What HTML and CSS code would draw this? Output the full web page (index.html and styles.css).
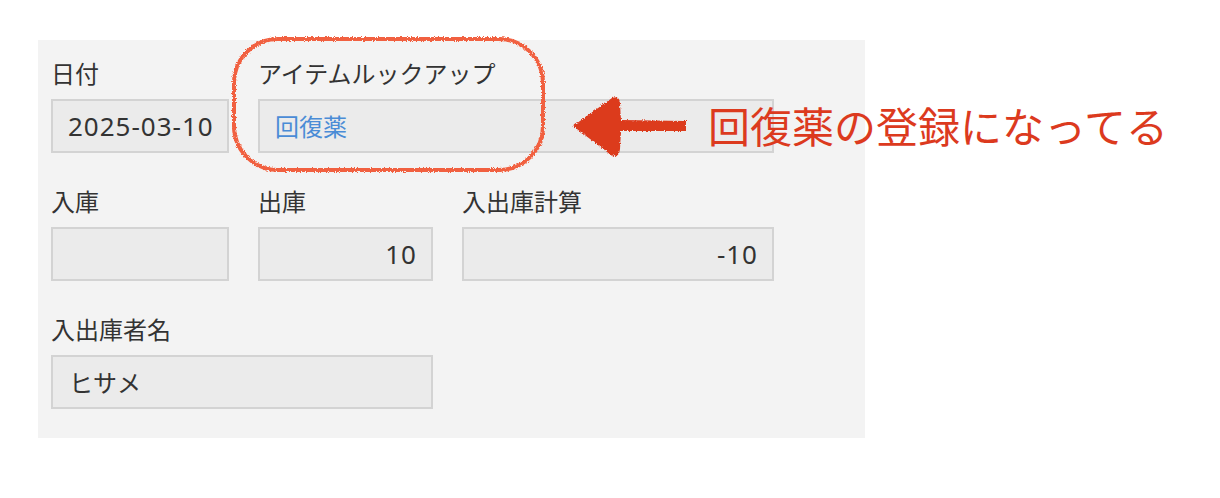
FILE: index.html
```html
<!DOCTYPE html>
<html lang="ja">
<head>
<meta charset="utf-8">
<title>入出庫</title>
<link rel="stylesheet" href="styles.css">
</head>
<body>
<div class="stage">
  <form class="panel">
    <div class="row">
      <div class="field w-date">
        <div class="label">日付</div>
        <div class="input">2025-03-10</div>
      </div>
      <div class="field w-lookup">
        <div class="label">アイテムルックアップ</div>
        <div class="input link">回復薬</div>
      </div>
    </div>
    <div class="row">
      <div class="field w-date">
        <div class="label">入庫</div>
        <div class="input num"></div>
      </div>
      <div class="field w-out">
        <div class="label">出庫</div>
        <div class="input num">10</div>
      </div>
      <div class="field w-calc">
        <div class="label">入出庫計算</div>
        <div class="input num">-10</div>
      </div>
    </div>
    <div class="row">
      <div class="field w-name">
        <div class="label">入出庫者名</div>
        <div class="input jp">ヒサメ</div>
      </div>
    </div>
  </form>

  <svg class="marks" width="1220" height="498" viewBox="0 0 1220 498" aria-hidden="true">
    <defs>
      <filter id="crayon" x="-5%" y="-5%" width="110%" height="110%">
        <feTurbulence type="fractalNoise" baseFrequency="0.9" numOctaves="2" seed="3" result="n"/>
        <feDisplacementMap in="SourceGraphic" in2="n" scale="4" xChannelSelector="R" yChannelSelector="G"/>
      </filter>
    </defs>
    <rect x="234" y="39" width="309" height="131" rx="44" ry="44" fill="none" stroke="#f1603f" stroke-width="4" filter="url(#crayon)"/>
    <path d="M573 126 L612 98 Q620 95 620 104 L621 120 L686 121 L686 131 L621 131 L620 149 Q619 159 611 155 Z" fill="#dc3a1e" filter="url(#crayon)"/>
  </svg>
  <div class="note">回復薬の登録になってる</div>
</div>
</body>
</html>
```

FILE: styles.css
```css
html, body {
  margin: 0;
  padding: 0;
  background: #ffffff;
}

body {
  font-family: "Noto Sans CJK JP", "Noto Sans", sans-serif;
  color: #333333;
}

.stage {
  position: relative;
  width: 1220px;
  height: 498px;
  padding-top: 40px;
  box-sizing: border-box;
}

.panel {
  margin: 0 0 0 38px;
  width: 827px;
  height: 398px;
  box-sizing: border-box;
  background: #f3f3f3;
  padding: 18px 13px 30px;
  display: flex;
  flex-direction: column;
  gap: 33px;
}

.row {
  display: flex;
  gap: 29px;
}

.field {
  display: flex;
  flex-direction: column;
}

.w-date { width: 178px; }
.w-lookup { width: 516px; }
.w-out { width: 175px; }
.w-calc { width: 312px; }
.w-name { width: 382px; }

.label {
  font-size: 24px;
  line-height: 30px;
  height: 30px;
  margin-bottom: 11px;
  color: #333333;
  white-space: nowrap;
}

.input {
  height: 54px;
  box-sizing: border-box;
  background: #ebebeb;
  border: 2px solid #d3d3d3;
  padding: 0 15px;
  font-family: "Noto Sans", "Noto Sans CJK JP", sans-serif;
  font-size: 26px;
  line-height: 50px;
  color: #333333;
  white-space: nowrap;
  letter-spacing: 1px;
}

.input.link {
  color: #4a8cd6;
  font-family: "Noto Sans CJK JP", sans-serif;
  font-size: 24px;
  letter-spacing: 0;
}

.input.jp {
  font-family: "Noto Sans CJK JP", sans-serif;
  font-size: 24px;
  letter-spacing: 0;
  padding-left: 16px;
}

.input.num {
  text-align: right;
  padding-right: 14px;
}

.marks {
  position: absolute;
  left: 0;
  top: 0;
  pointer-events: none;
}

.note {
  position: absolute;
  left: 708px;
  top: 99px;
  font-size: 42px;
  line-height: 52px;
  color: #dc3a1e;
  white-space: nowrap;
}
```
